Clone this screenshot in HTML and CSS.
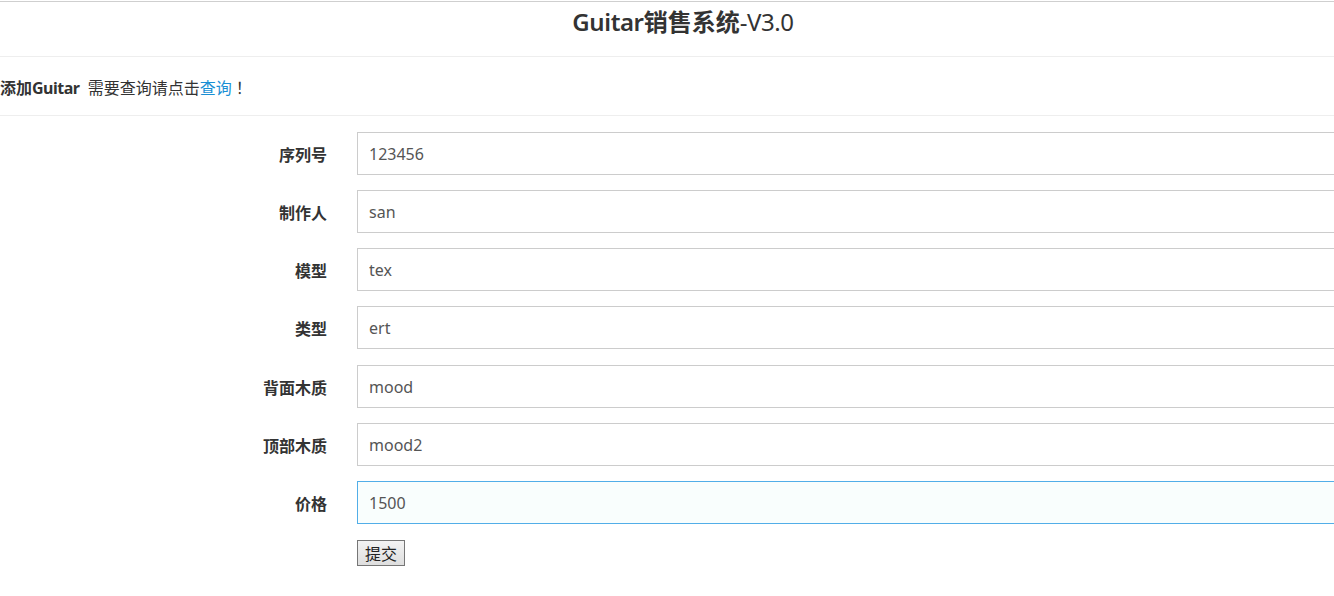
FILE: index.html
```html
<!DOCTYPE html>
<html lang="zh-CN">
<head>
<meta charset="utf-8">
<title>Guitar销售系统-V3.0</title>
<link rel="stylesheet" href="styles.css">
</head>
<body>
<div class="page">
  <header class="header">
    <h1 class="title"><span class="t-latin">Guitar</span><span class="t-cjk">销售系统</span><span class="t-ver">-V3.0</span></h1>
  </header>
  <div class="subbar">
    <b class="sub-strong">添加<span class="tight">Guitar</span></b>&nbsp; 需要查询请点击<a class="link" href="#">查询</a><span class="cjk">！</span>
  </div>
  <form class="form">
    <div class="row"><label class="label">序列号</label><input class="input" type="text" value="123456"></div>
    <div class="row"><label class="label">制作人</label><input class="input" type="text" value="san"></div>
    <div class="row"><label class="label">模型</label><input class="input" type="text" value="tex"></div>
    <div class="row"><label class="label">类型</label><input class="input" type="text" value="ert"></div>
    <div class="row"><label class="label">背面木质</label><input class="input" type="text" value="mood"></div>
    <div class="row"><label class="label">顶部木质</label><input class="input" type="text" value="mood2"></div>
    <div class="row"><label class="label">价格</label><input class="input input-focus" type="text" value="1500"></div>
    <div class="actions"><button class="btn" type="button">提交</button></div>
  </form>
</div>
</body>
</html>
```
FILE: styles.css
```css
html, body {
  margin: 0;
  padding: 0;
  background: #fff;
}
body {
  padding-top: 1px;
  overflow: hidden;
  font-family: "Noto Sans", "Noto Sans CJK SC", sans-serif;
  color: #333;
}
.page {
  width: 1366px;
}
.header {
  border-top: 1px solid #cfcfcf;
  border-bottom: 1px solid #eee;
  height: 54px;
  box-sizing: content-box;
  text-align: center;
}
.title {
  margin: 0;
  padding-top: 4px;
  font-size: 24px;
  line-height: 32px;
  font-weight: 500;
  color: #333;
}
.t-latin { font-weight: 600; letter-spacing: -0.4px; }
.t-cjk { font-weight: 700; }
.t-ver { font-weight: 400; letter-spacing: -0.4px; }
.subbar {
  height: 40px;
  padding-top: 18px;
  border-bottom: 1px solid #eee;
  font-size: 16px;
  line-height: 24px;
  color: #333;
  text-spacing-trim: space-all;
}
.sub-strong { font-weight: 700; }
.tight { letter-spacing: -0.5px; }
.cjk {
  font-family: "Noto Sans CJK TC", "Noto Sans CJK SC", sans-serif;
  display: inline-block;
  width: 16px;
  text-align: center;
}
.link {
  color: #1a8fd4;
  text-decoration: none;
}
.form {
  padding-top: 16px;
}
.row {
  display: grid;
  grid-template-columns: 327px 994px;
  column-gap: 30px;
  margin-bottom: 15.15px;
}
.label {
  text-align: right;
  font-size: 16px;
  font-weight: 700;
  height: 43px;
  line-height: 47px;
  color: #333;
}
.input {
  box-sizing: border-box;
  height: 43px;
  margin: 0;
  border: 1px solid #ccc;
  border-radius: 0;
  padding: 1px 11px 0;
  font-family: "Noto Sans", "Noto Sans CJK SC", sans-serif;
  font-size: 16px;
  color: #555;
  background: #fff;
  outline: none;
}
.input-focus {
  border-color: #52aee8;
  background: #f9fefd;
}
.actions {
  padding-left: 357px;
  padding-top: 1px;
}
.btn {
  box-sizing: border-box;
  height: 26px;
  width: 48px;
  padding: 0;
  border: 1px solid #767676;
  border-radius: 0;
  background: linear-gradient(#f3f3f3, #dedede);
  font-family: "Noto Sans CJK SC", sans-serif;
  font-size: 16px;
  line-height: 22px;
  color: #222;
}
```
